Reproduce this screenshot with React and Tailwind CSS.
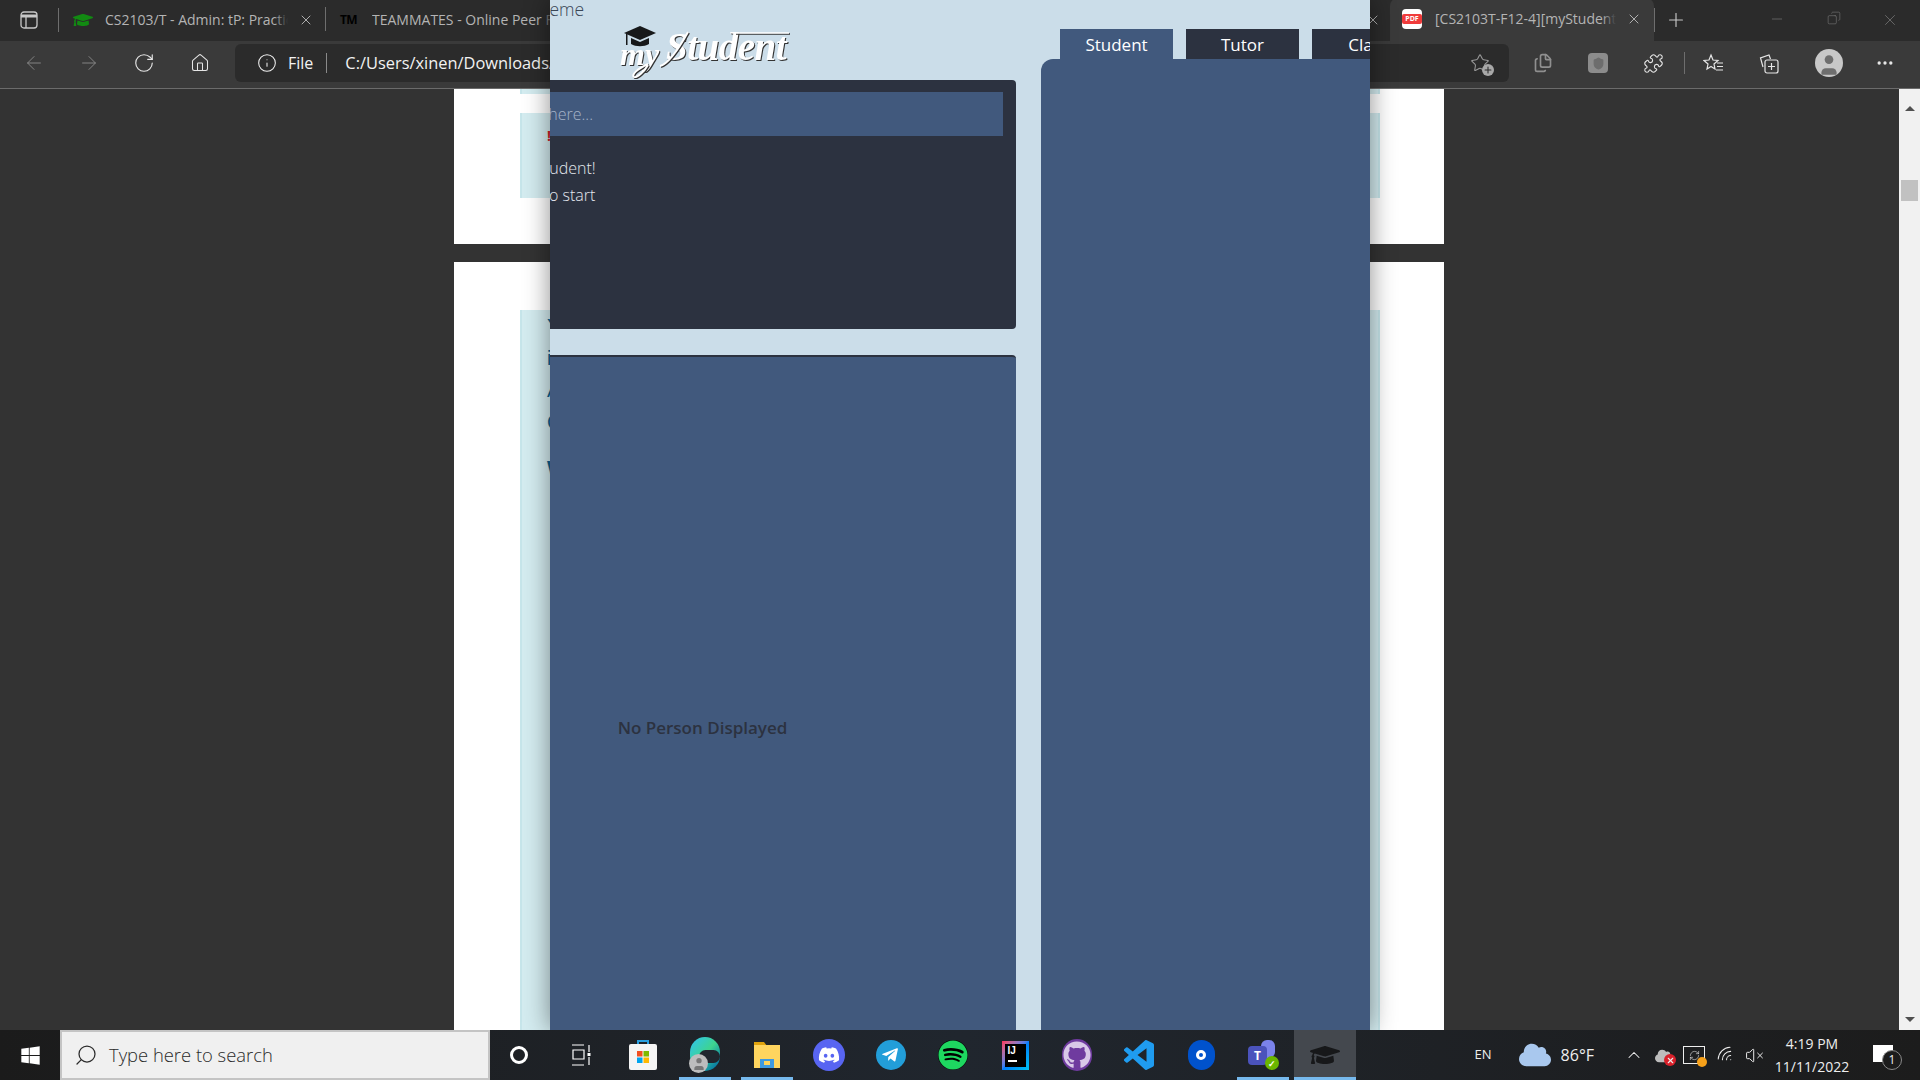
import React from "react";
import {
  ArrowLeft,
  ArrowRight,
  RotateCw,
  House,
  Info,
  X,
  Plus,
  Minus,
  Copy,
  Puzzle,
  ChevronUp,
  Search,
  VolumeX,
  Wifi,
  Ellipsis,
  Star,
  Shield,
  User,
  RefreshCw,
  Files,
} from "lucide-react";
import { FaDiscord, FaTelegramPlane, FaSpotify, FaGithub, FaGraduationCap, FaWindows, FaCloud } from "react-icons/fa";

const Tab = ({ icon, title }) => (
  <div className="relative flex h-full w-[267px] shrink-0 items-center">
    <div className="flex w-[38px] shrink-0 justify-end pr-[4px]">{icon}</div>
    <div className="relative ml-[8px] w-[183px] overflow-hidden whitespace-nowrap text-[14px] text-[#b4b4b4]">
      {title}
      <div className="absolute inset-y-0 right-0 w-[14px] bg-gradient-to-r from-transparent to-[#2b2b2b]" />
    </div>
    <X size={16} strokeWidth={1.25} className="ml-[10px] text-[#c8c8c8]" />
    <div className="absolute right-0 top-[7px] h-[24px] w-px bg-[#6e6e6e]" />
  </div>
);

const TabStrip = () => (
  <div className="flex h-[41px] shrink-0 items-center bg-[#2b2b2b] pb-[2px]">
    <div className="flex h-[24px] w-[59px] shrink-0 items-center justify-center border-r border-[#6e6e6e]">
      <svg width="18" height="18" viewBox="0 0 18 18" fill="none" stroke="#c8c8c8" strokeWidth="1.3">
        <rect x="1" y="1" width="16" height="16" rx="3" />
        <path d="M1 5h16" strokeWidth="3" />
        <path d="M6 5v12" />
      </svg>
    </div>
    <Tab icon={<FaGraduationCap size={20} className="text-[#128a12]" />} title="CS2103/T - Admin: tP: Practical Exam" />
    <Tab
      icon={<span className="w-[20px] text-[12px] font-bold leading-none tracking-tighter text-black">TM</span>}
      title="TEAMMATES - Online Peer Feedback"
    />
    <Tab title="" />
    <Tab title="" />
    <div className="flex h-full w-[263px] shrink-0 items-center">
      <X size={16} strokeWidth={1.25} className="ml-[238px] text-[#c8c8c8]" />
    </div>
    <div className="flex h-[43px] w-[264px] shrink-0 items-center rounded-t-lg bg-[#3a3a3a] pb-[2px]">
      <div className="ml-[12px] flex h-[20px] w-[20px] items-center justify-center rounded-sm bg-white">
        <span className="w-full rounded-[2px] bg-[#f03c3c] text-center text-[7px] font-bold leading-[10px] text-white">PDF</span>
      </div>
      <div className="relative ml-[13px] w-[181px] overflow-hidden whitespace-nowrap text-[14px] text-[#b4b4b4]">
        [CS2103T-F12-4][myStudent] Developer Guide
        <div className="absolute inset-y-0 right-0 w-[14px] bg-gradient-to-r from-transparent to-[#3a3a3a]" />
      </div>
      <X size={16} strokeWidth={1.25} className="ml-[10px] text-[#c8c8c8]" />
    </div>
    <div className="h-[24px] w-px bg-[#6e6e6e]" />
    <Plus size={22} strokeWidth={1.25} className="ml-[10px] text-[#c8c8c8]" />
    <div className="ml-auto flex text-[#7a7a7a]">
      <div className="flex w-[57px] justify-center"><Minus size={16} strokeWidth={1} /></div>
      <div className="flex w-[57px] justify-center"><Copy size={14} strokeWidth={1} className="-scale-x-100" /></div>
      <div className="flex w-[58px] justify-center pr-[2px]"><X size={18} strokeWidth={1} /></div>
    </div>
  </div>
);

const Toolbar = () => (
  <div className="flex h-[48px] shrink-0 items-center border-b border-[#6b6b6b] bg-[#3a3a3a] pb-[3px]">
    <div className="flex w-[235px] shrink-0 items-center pl-[23px] text-[#e6e6e6]">
      <ArrowLeft size={22} strokeWidth={1} className="text-[#8a8a8a]" />
      <ArrowRight size={22} strokeWidth={1} className="ml-[33px] text-[#8a8a8a]" />
      <RotateCw size={22} strokeWidth={1.25} className="ml-[33px]" />
      <House size={20} strokeWidth={1.25} className="ml-[35px]" />
    </div>
    <div className="flex h-[38px] w-[1274px] shrink-0 items-center rounded-md bg-[#2b2b2b] text-[#f2f2f2]">
      <Info size={20} strokeWidth={1.25} className="ml-[22px]" />
      <span className="ml-[11px] text-[16px]">File</span>
      <div className="ml-[13px] h-[20px] w-px bg-[#8a8a8a]" />
      <span className="ml-[18px] whitespace-nowrap text-[16.4px]">C:/Users/xinen/Downloads/CS2103T-F12-4.pdf</span>
      <div className="relative ml-auto mr-[19px] text-[#9a9a9a]">
        <Star size={20} strokeWidth={1.25} />
        <div className="absolute -bottom-[3px] -right-[4px] flex h-[12px] w-[12px] items-center justify-center rounded-full bg-[#a8a8a8]">
          <Plus size={10} strokeWidth={2.5} className="text-[#2b2b2b]" />
        </div>
      </div>
    </div>
    <div className="flex items-center text-[#e6e6e6]">
      <Files size={20} className="ml-[24px] text-[#8f8f8f]" />
      <div className="ml-[35px] flex h-[20px] w-[20px] items-center justify-center rounded-sm bg-[#8c8c8c]">
        <Shield size={13} className="text-[#6d6d6d]" fill="#6d6d6d" />
      </div>
      <Puzzle size={21} strokeWidth={1.25} className="ml-[35px]" />
      <div className="ml-[20px] h-[22px] w-px bg-[#6e6e6e]" />
      <svg width="21" height="21" viewBox="0 0 21 21" fill="none" stroke="currentColor" strokeWidth="1.2" className="ml-[18px]">
        <path d="M8 2l2 5 5 .5-4 3.5 1 5-4-2.5L4 16l1-5-4-3.5L6 7z" />
        <path d="M14 10h6M14 13.5h6M13 17h7" />
      </svg>
      <svg width="21" height="21" viewBox="0 0 21 21" fill="none" stroke="currentColor" strokeWidth="1.2" className="ml-[35px]">
        <path d="M4 14L1.5 5 10 2l1.5 4" />
        <rect x="6" y="7" width="13" height="13" rx="2" />
        <path d="M12.5 10v7M9 13.5h7" />
      </svg>
      <div className="ml-[35px] flex h-[28px] w-[28px] items-center justify-center overflow-hidden rounded-full bg-[#c8c8c8]">
        <User size={26} fill="#6e6e6e" strokeWidth={0} className="mt-[4px]" />
      </div>
      <Ellipsis size={20} className="ml-[32px]" />
    </div>
  </div>
);

const Callout = ({ className, children }) => (
  <div className={`ml-[66px] w-[860px] border-x-2 border-[#c6e5ea] bg-[#d4ecf0] ${className}`}>{children}</div>
);

const PdfView = () => (
  <div className="flex min-h-0 flex-1 overflow-hidden bg-[#333333]">
    <div className="ml-[454px] w-[990px]">
      <div className="h-[155px] bg-white">
        <Callout className="h-[5px]" />
        <Callout className="mt-[19px] h-[85px] pl-[25px] pt-[12px] text-[14px] font-bold text-[#d02020]">!</Callout>
      </div>
      <div className="mt-[18px] h-[780px] bg-white pt-[48px]">
        <Callout className="h-[720px] pl-[25px] font-['Liberation_Sans',sans-serif] text-[20px] leading-[32px] text-[#0f5f8c]">
          <div>Y</div>
          <div>i</div>
          <div>A</div>
          <div>C</div>
          <div className="mt-[14px] font-bold">W</div>
        </Callout>
      </div>
    </div>
    <div className="ml-auto flex w-[21px] flex-col items-center bg-[#f1f1f1]">
      <div className="mt-[17px] h-0 w-0 border-x-[5px] border-b-[5px] border-x-transparent border-b-[#505050]" />
      <div className="mt-[69px] h-[21px] w-[17px] bg-[#c1c1c1]" />
      <div className="mb-[8px] mt-auto h-0 w-0 border-x-[5px] border-t-[5px] border-x-transparent border-t-[#505050]" />
    </div>
  </div>
);

const TaskIcon = ({ children, active, current }) => (
  <div className={`relative flex h-full w-[62px] shrink-0 items-center justify-center ${current ? "bg-[#44484e]" : ""}`}>
    {children}
    {active && <div className={`absolute bottom-0 h-[3px] bg-[#76b9ed] ${current ? "inset-x-0" : "inset-x-[5px]"}`} />}
  </div>
);

const Taskbar = () => (
  <div className="relative z-20 flex h-[50px] shrink-0 items-center bg-gradient-to-r from-[#1b1b1b] via-[#20262e] to-[#1c1c1c]">
    <div className="flex w-[60px] shrink-0 justify-center">
      <FaWindows size={21} className="text-white" />
    </div>
    <div className="flex h-full w-[430px] shrink-0 items-center border-2 border-[#c4c4c4] bg-[#f0f0f0] text-[#2b2b2b]">
      <Search size={24} strokeWidth={1.25} className="ml-[12px] -scale-x-100" />
      <span className="ml-[11px] whitespace-nowrap text-[18.4px] font-light">Type here to search</span>
    </div>
    <div className="-ml-[2px] flex h-full">
      <TaskIcon>
        <div className="h-[18px] w-[18px] rounded-full border-[3px] border-white" />
      </TaskIcon>
      <TaskIcon>
        <svg width="20" height="22" viewBox="0 0 20 22" fill="none" stroke="#fff" strokeWidth="1.2">
          <path d="M1 1h12M1 21h12M2 6h11v9H2zM18 1v7M18 13v8" />
          <rect x="16.5" y="9" width="3" height="3" fill="#fff" stroke="none" />
        </svg>
      </TaskIcon>
      <TaskIcon>
        <svg width="30" height="32" viewBox="0 0 30 32">
          <path d="M10 6V2h10v4" fill="none" stroke="#2aa0e0" strokeWidth="2" />
          <rect x="1" y="5" width="28" height="26" rx="2" fill="#f5f5f5" />
          <rect x="9" y="12" width="5.5" height="5.5" fill="#f25022" />
          <rect x="15.5" y="12" width="5.5" height="5.5" fill="#7fba00" />
          <rect x="9" y="18.5" width="5.5" height="5.5" fill="#00a4ef" />
          <rect x="15.5" y="18.5" width="5.5" height="5.5" fill="#ffb900" />
        </svg>
      </TaskIcon>
      <TaskIcon active>
        <div className="relative h-[36px] w-[30px]">
          <div className="h-[34px] w-[30px] rounded-full bg-gradient-to-br from-[#35c1f1] via-[#3fd48e] to-[#0c59a4]" />
          <div className="absolute left-[9px] top-[13px] h-[13px] w-[21px] rounded-full bg-[#20262e]" />
          <div className="absolute -left-[1px] bottom-0 flex h-[19px] w-[19px] items-center justify-center overflow-hidden rounded-full bg-[#bdbdbd]">
            <User size={16} fill="#777" strokeWidth={0} />
          </div>
        </div>
      </TaskIcon>
      <TaskIcon active>
        <svg width="28" height="30" viewBox="0 0 28 30">
          <path d="M1 2h10l3 4H1z" fill="#e0a30d" />
          <rect x="1" y="5" width="26" height="23" fill="#ffd55f" />
          <path d="M7 28v-9h14v9z" fill="#3f9ae0" />
          <rect x="11" y="21" width="6" height="4" fill="#ffd55f" />
        </svg>
      </TaskIcon>
      <TaskIcon>
        <div className="flex h-[32px] w-[32px] items-center justify-center rounded-full bg-[#5865f2]">
          <FaDiscord size={22} className="text-white" />
        </div>
      </TaskIcon>
      <TaskIcon>
        <div className="flex h-[30px] w-[30px] items-center justify-center rounded-full bg-[#229ed9]">
          <FaTelegramPlane size={18} className="mr-[2px] text-white" />
        </div>
      </TaskIcon>
      <TaskIcon>
        <div className="flex h-[30px] w-[30px] items-center justify-center rounded-full bg-black">
          <FaSpotify size={30} className="text-[#1ed760]" />
        </div>
      </TaskIcon>
      <TaskIcon>
        <div className="relative h-[29px] w-[27px] bg-gradient-to-br from-[#fe2857] via-[#087cfa] to-[#07c3f2] p-[3px]">
          <div className="flex h-full w-full flex-col bg-black pl-[3px] font-['Liberation_Sans',sans-serif] text-[10px] font-bold leading-[13px] text-white">
            IJ
            <div className="mt-[3px] h-[2px] w-[9px] bg-white" />
          </div>
        </div>
      </TaskIcon>
      <TaskIcon>
        <div className="flex h-[32px] w-[30px] items-center justify-center rounded-full bg-[#6f3b9f]">
          <FaGithub size={28} className="text-[#d9c8e8]" />
        </div>
      </TaskIcon>
      <TaskIcon>
        <svg width="30" height="30" viewBox="0 0 24 24" fill="#1f9cf0">
          <path d="M23.15 2.587L18.21.21a1.494 1.494 0 0 0-1.705.29l-9.46 8.63-4.12-3.128a.999.999 0 0 0-1.276.057L.327 7.261A1 1 0 0 0 .326 8.74L3.899 12 .326 15.26a1 1 0 0 0 .001 1.479L1.65 17.94a.999.999 0 0 0 1.276.057l4.12-3.128 9.46 8.63a1.492 1.492 0 0 0 1.704.29l4.942-2.377A1.5 1.5 0 0 0 24 20.06V3.939a1.5 1.5 0 0 0-.85-1.352zm-5.146 14.861L10.826 12l7.178-5.448v10.896z" />
        </svg>
      </TaskIcon>
      <TaskIcon>
        <div className="flex h-[30px] w-[27px] items-center justify-center rounded-full bg-[#0052cc]">
          <div className="h-[10px] w-[10px] rounded-full border-[3px] border-white" />
        </div>
      </TaskIcon>
      <TaskIcon active>
        <div className="relative h-[30px] w-[30px]">
          <div className="absolute right-[3px] top-0 h-[18px] w-[14px] rounded-md bg-[#7b83eb]" />
          <div className="absolute bottom-[5px] left-0 flex h-[19px] w-[19px] items-center justify-center rounded-sm bg-[#4b53bc] text-[12px] font-bold text-white">T</div>
          <div className="absolute -right-[1px] bottom-0 flex h-[14px] w-[14px] items-center justify-center rounded-full bg-[#6bb700] text-[9px] font-bold leading-none text-white">✓</div>
        </div>
      </TaskIcon>
      <TaskIcon active current>
        <FaGraduationCap size={30} className="text-[#17181a]" />
      </TaskIcon>
    </div>
    <div className="ml-auto flex h-full items-center text-[#eeeeee]">
      <span className="mr-[27px] text-[13px]">EN</span>
      <FaCloud size={32} className="mr-[10px] text-[#a9c8ee]" />
      <span className="mr-[30px] text-[16px]">86°F</span>
      <ChevronUp size={20} strokeWidth={1.25} className="mr-[11px]" />
      <div className="relative mr-[10px] h-[16px] w-[18px]">
        <FaCloud size={18} className="text-[#bdbdbd]" />
        <div className="absolute -bottom-[3px] -right-[3px] flex h-[12px] w-[12px] items-center justify-center rounded-full bg-[#d9202a]">
          <X size={9} strokeWidth={3} />
        </div>
      </div>
      <div className="relative mr-[11px] flex h-[18px] w-[22px] items-center justify-center border border-[#eeeeee]">
        <RefreshCw size={11} strokeWidth={1.25} />
        <div className="absolute -bottom-[4px] -right-[3px] h-[10px] w-[10px] rounded-full bg-[#f7a11a]" />
      </div>
      <Wifi size={20} strokeWidth={1.25} className="mr-[9px] -rotate-45" />
      <VolumeX size={19} strokeWidth={1.25} className="mr-[8px]" />
      <div className="w-[80px] whitespace-nowrap text-center text-[14px] leading-[23px]">
        <div>4:19 PM</div>
        <div>11/11/2022</div>
      </div>
      <div className="relative ml-[21px] mr-[27px] h-[20px] w-[20px]">
        <div className="h-[17px] w-[20px] bg-white" />
        <div className="absolute -bottom-[5px] -right-[9px] flex h-[20px] w-[20px] items-center justify-center rounded-full border border-[#8a8a8a] bg-[#1c1c1c] text-[12px]">1</div>
      </div>
    </div>
  </div>
);

// the real logo is a script face, nearest installed one is Liberation Serif italic
const Logo = () => (
  <svg width="175" height="60" viewBox="0 0 175 60" className="ml-[231px]">
    <g transform="translate(5,6)" fill="#17181a">
      <path d="M15 0L31 7l-16 7L-1 7z" />
      <path d="M6 12v6c5 3 13 3 18 0v-6l-9 4z" />
      <path d="M1 8h1.5v11H1z" />
    </g>
    <g fill="#ffffff" style={{ filter: "drop-shadow(1px 1px 0 #333)" }}>
      <text x="0" y="45" fontFamily="'Liberation Serif', serif" fontStyle="italic" fontWeight="bold" fontSize="32">my</text>
      <text x="46" y="40" fontFamily="'Liberation Serif', serif" fontStyle="italic" fontWeight="bold" fontSize="39" letterSpacing="-0.5">Student</text>
    </g>
    <g fill="none" stroke="#ffffff" strokeWidth="2" style={{ filter: "drop-shadow(1px 1px 0 #333)" }}>
      <path d="M28 45c-4 7-11 13-14 12-3-2 3-8 14-13" />
      <path d="M68 12C58 30 48 44 40 46" />
      <path d="M115 13h54" strokeWidth="1.5" />
    </g>
  </svg>
);

const MyStudentWindow = () => (
  <div className="absolute left-[550px] top-0 z-10 h-[1030px] w-[820px] overflow-hidden bg-[#cbdde9] font-['Open_Sans',sans-serif] shadow-[0_0_24px_rgba(0,0,0,0.45)]">
    <div className="h-[20px] -translate-x-[20px] -translate-y-[4px] text-[17.5px] font-light text-[#3a4656]">Theme</div>
    <div className="ml-[-161px] flex">
      <div className="w-[627px] shrink-0">
        <div className="h-[60px]">
          <Logo />
        </div>
        <div className="h-[249px] rounded bg-[#2c3240] px-[13px] pt-[12px] text-[16px] font-light text-[#e4e8ee]">
          <div className="flex h-[44px] items-center bg-[#41597d] pl-[14px] text-[16px] text-[#a5b4c8]">Enter a command here...</div>
          <div className="mt-[19px] whitespace-nowrap pl-[22px] leading-[27px]">
            <div>Welcome to myStudent!</div>
            <div>Enter command to start</div>
          </div>
        </div>
        <div className="mt-[26px] flex h-[744px] items-center justify-center rounded border-t-2 border-[#2c3240] bg-[#41597d] text-[17px] font-semibold text-[#2c3240]">
          No Person Displayed
        </div>
      </div>
      <div className="ml-[25px] w-[400px] shrink-0">
        <div className="mt-[9px] flex h-[30px] gap-[13px] pl-[19px]">
          <div className="flex w-[113px] items-center justify-center bg-[#41597d] pt-[2px] text-[17px] font-medium text-white">Student</div>
          <div className="flex w-[113px] items-center justify-center bg-[#2c3240] pt-[2px] text-[17px] font-medium text-white">Tutor</div>
          <div className="flex w-[113px] items-center justify-center bg-[#2c3240] pt-[2px] text-[17px] font-medium text-white">Class</div>
        </div>
        <div className="h-[1000px] rounded-tl-xl bg-[#41597d]" />
      </div>
    </div>
  </div>
);

export default function App() {
  return (
    <div className="relative flex h-[1080px] w-[1920px] flex-col overflow-hidden bg-[#333333] font-['Open_Sans',sans-serif]">
      <TabStrip />
      <Toolbar />
      <PdfView />
      <Taskbar />
      <MyStudentWindow />
    </div>
  );
}
